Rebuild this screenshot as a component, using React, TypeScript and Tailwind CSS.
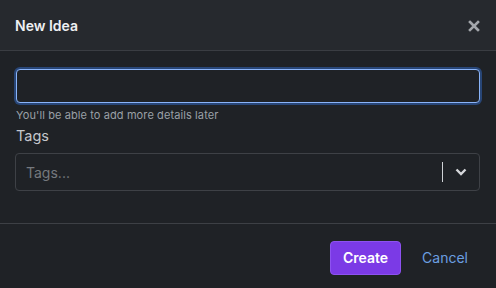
import React from "react";

export default function App() {
  return (
    <div className="w-[496px] h-[288px] bg-[#1f2226] flex flex-col" style={{ fontFamily: "Inter, 'Noto Sans', sans-serif" }}>
      <div className="h-[51px] bg-[#26292e] border-b border-[#3a3d42] flex items-center justify-between pl-[15px] pr-[16px]">
        <span className="text-[14px] font-semibold text-[#eef0f2]">New Idea</span>
        <svg width="12" height="12" viewBox="0 0 12 12" className="mt-[2px]">
          <path d="M2 2L10 10M10 2L2 10" stroke="#a3a6ab" strokeWidth="2.6" strokeLinecap="square" />
        </svg>
      </div>
      <div className="flex flex-col px-[16px] pt-[18px] h-[173px] border-b border-[#3d4045]">
        <div className="h-[34px] rounded-[4px] border border-[#8ab4f8] shadow-[0_0_0_2px_#284677] bg-[#1f2226]" />
        <div className="text-[11px] text-[#9aa0a6] mt-[5px] leading-[14px] tracking-[0.1px]">You'll be able to add more details later</div>
        <div className="text-[14.5px] text-[#c4c7cc] mt-[5px] leading-[18px]">Tags</div>
        <div className="mt-[8px] -ml-px h-[38px] rounded-[4px] border border-[#3e4146] flex items-center pl-[10px]">
          <span className="flex-1 text-[14px] text-[#75797e]">Tags...</span>
          <div className="w-px h-[20px] bg-[#cfd2d6]" />
          <div className="w-[36px] flex justify-center">
            <svg width="12" height="8" viewBox="0 0 12 8">
              <path d="M1.5 1.5L6 6L10.5 1.5" stroke="#d5d7da" strokeWidth="2.4" fill="none" />
            </svg>
          </div>
        </div>
      </div>
      <div className="flex-1 flex items-center justify-end pr-[28px] gap-[21px] pt-[3px]">
        <button className="h-[34px] w-[71px] rounded-[4px] bg-[#7b3ae6] border border-[#8d52f0] text-white text-[14px] font-semibold">Create</button>
        <span className="text-[14px] text-[#6b9fe0]">Cancel</span>
      </div>
    </div>
  );
}
